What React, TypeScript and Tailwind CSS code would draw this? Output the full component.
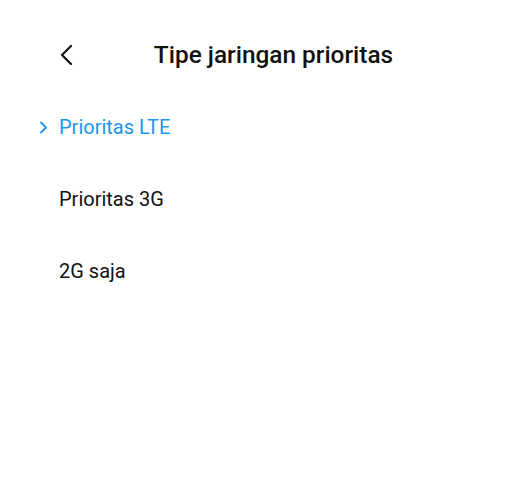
import React from "react";

export default function App() {
  return (
    <div
      className="w-[531px] h-[493px] bg-white pt-[35px]"
      style={{ fontFamily: "Roboto, 'Noto Sans', sans-serif" }}
    >
      <div className="relative flex items-center h-[40px]">
        <svg
          className="absolute left-[59px] top-[9px]"
          width="16"
          height="22"
          viewBox="0 0 16 22"
          fill="none"
        >
          <path d="M12 2 L3 11 L12 20" stroke="#111" strokeWidth="2.2" strokeLinecap="round" strokeLinejoin="round" />
        </svg>
        <div className="w-full text-center pl-[16px] text-[24.4px] font-medium text-[#111]">
          Tipe jaringan prioritas
        </div>
      </div>
      <div className="flex flex-col mt-[16px]">
        <div className="relative h-[72px] flex items-center pl-[59px] text-[20px] text-[#1d96e8]">
          <svg className="absolute left-[39px] top-[30px]" width="9" height="13" viewBox="0 0 9 13" fill="none">
            <path d="M2 1.5 L7 6.5 L2 11.5" stroke="#1d96e8" strokeWidth="1.8" strokeLinecap="round" strokeLinejoin="round" />
          </svg>
          Prioritas LTE
        </div>
        <div className="h-[72px] flex items-center pl-[59px] text-[20px] text-[#111]">Prioritas 3G</div>
        <div className="h-[72px] flex items-center pl-[59px] text-[20px] text-[#111]">2G saja</div>
      </div>
    </div>
  );
}
